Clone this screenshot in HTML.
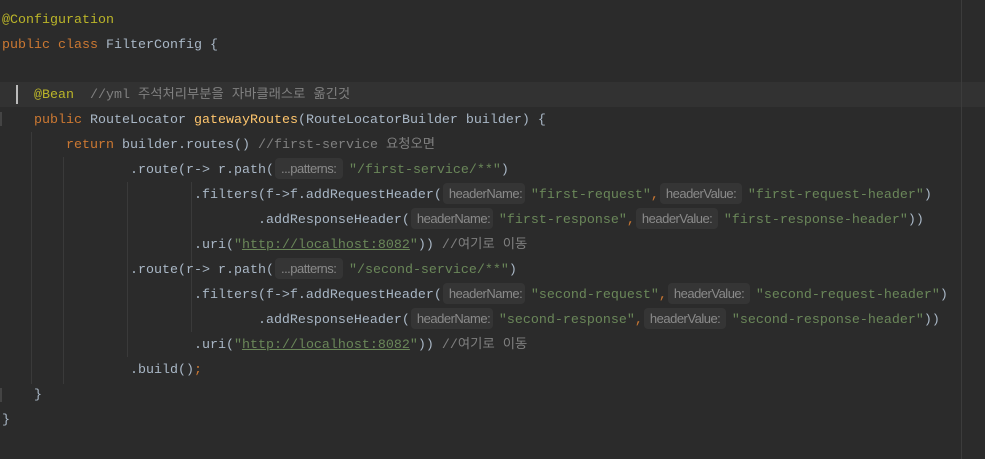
<!DOCTYPE html>
<html><head><meta charset="utf-8"><style>
html,body{margin:0;padding:0;background:#2b2b2b;width:985px;height:459px;overflow:hidden;position:relative}
.l{position:absolute;left:2px;height:25px;line-height:25px;white-space:pre;font-family:"Liberation Mono","Noto Sans CJK KR",monospace;font-size:13.33px;color:#a9b7c6}
.k{color:#cc7832}.a{color:#bbb529}.s{color:#6a8759}.c{color:#808080}.m{color:#ffc66d}.u{text-decoration:underline}
.h{display:inline-block;height:21px;line-height:21px;vertical-align:middle;margin-top:-2px;background:#353535;border-radius:4px;color:#8a8a8a;font-family:"Liberation Sans",sans-serif;font-size:13px;padding:0 0 0 6px;box-sizing:border-box;margin-right:6px;margin-left:1px;letter-spacing:-0.5px;overflow:hidden}
.g{position:absolute;width:1px;background:#3a3a3a}
</style></head><body>
<div style="position:absolute;left:0;top:82px;width:985px;height:25px;background:#323232"></div>
<div style="position:absolute;left:961px;top:0;width:1px;height:459px;background:#3c3c3c"></div>
<div style="position:absolute;left:16px;top:85px;width:2px;height:19px;background:#bbbbbb"></div>
<div style="position:absolute;left:0;top:112px;width:2px;height:14px;background:#444"></div>
<div style="position:absolute;left:0;top:388px;width:2px;height:14px;background:#444"></div>
<div class="g" style="left:31px;top:132px;height:252px"></div>
<div class="g" style="left:63px;top:157px;height:227px"></div>
<div class="g" style="left:127px;top:182px;height:175px"></div>
<div class="g" style="left:191px;top:182px;height:150px"></div>

<div class="l" style="top:8px"><span class="a">@Configuration</span></div>
<div class="l" style="top:33px"><span class="k">public class </span>FilterConfig {</div>
<div class="l" style="top:83px">    <span class="a">@Bean</span>  <span class="c">//yml 주석처리부분을 자바클래스로 옮긴것</span></div>
<div class="l" style="top:108px">    <span class="k">public </span>RouteLocator <span class="m">gatewayRoutes</span>(RouteLocatorBuilder builder) {</div>
<div class="l" style="top:133px">        <span class="k">return </span>builder.routes() <span class="c">//first-service 요청오면</span></div>
<div class="l" style="top:158px">                .route(r-&gt; r.path(<span class="h" style="width:68px">...patterns:</span><span class="s">"/first-service/**"</span>)</div>
<div class="l" style="top:183px">                        .filters(f-&gt;f.addRequestHeader(<span class="h" style="width:82px">headerName:</span><span class="s">"first-request"</span><span class="k">,</span><span class="h" style="width:82px">headerValue:</span><span class="s">"first-request-header"</span>)</div>
<div class="l" style="top:208px">                                .addResponseHeader(<span class="h" style="width:82px">headerName:</span><span class="s">"first-response"</span><span class="k">,</span><span class="h" style="width:82px">headerValue:</span><span class="s">"first-response-header"</span>))</div>
<div class="l" style="top:233px">                        .uri(<span class="s">"<span class="u">http://localhost:8082</span>"</span>)) <span class="c">//여기로 이동</span></div>
<div class="l" style="top:258px">                .route(r-&gt; r.path(<span class="h" style="width:68px">...patterns:</span><span class="s">"/second-service/**"</span>)</div>
<div class="l" style="top:283px">                        .filters(f-&gt;f.addRequestHeader(<span class="h" style="width:82px">headerName:</span><span class="s">"second-request"</span><span class="k">,</span><span class="h" style="width:82px">headerValue:</span><span class="s">"second-request-header"</span>)</div>
<div class="l" style="top:308px">                                .addResponseHeader(<span class="h" style="width:82px">headerName:</span><span class="s">"second-response"</span><span class="k">,</span><span class="h" style="width:82px">headerValue:</span><span class="s">"second-response-header"</span>))</div>
<div class="l" style="top:333px">                        .uri(<span class="s">"<span class="u">http://localhost:8082</span>"</span>)) <span class="c">//여기로 이동</span></div>
<div class="l" style="top:358px">                .build()<span class="k">;</span></div>
<div class="l" style="top:383px">    }</div>
<div class="l" style="top:408px">}</div>
</body></html>
